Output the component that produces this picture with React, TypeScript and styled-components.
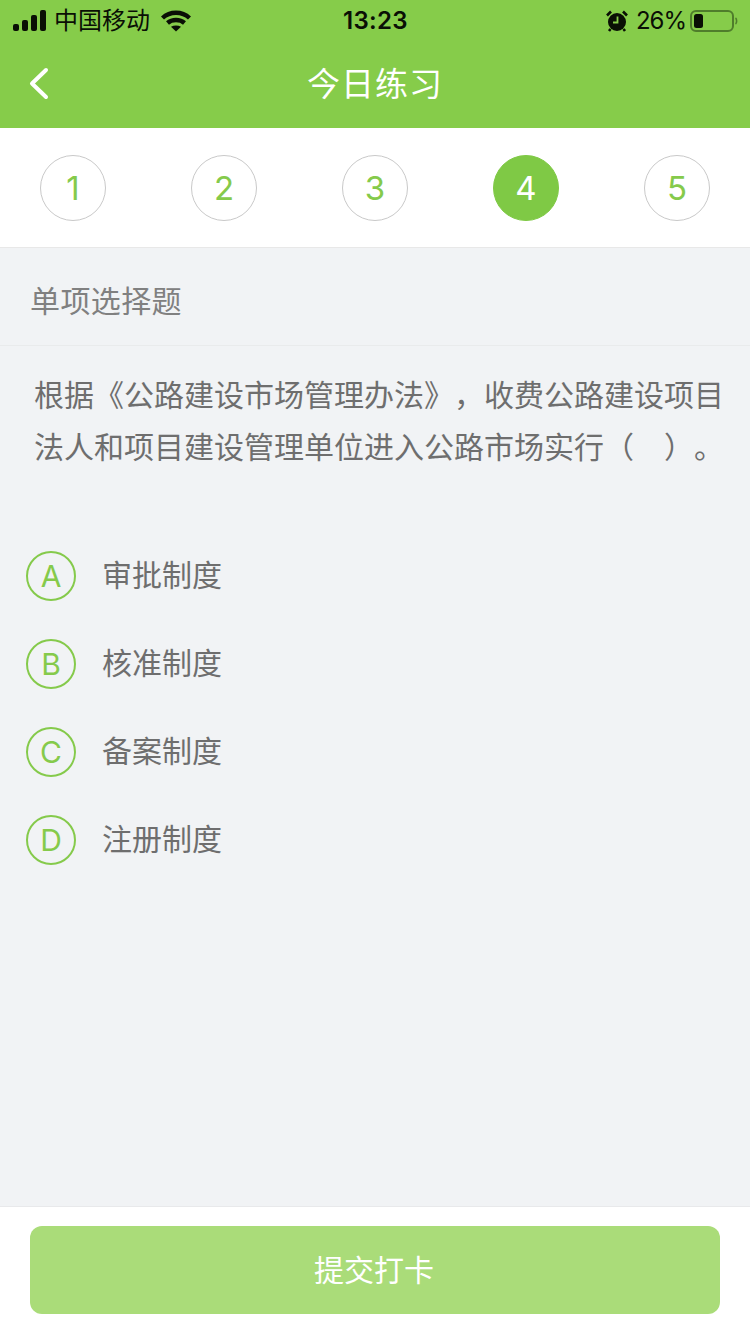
import React from "react";
import styled, { createGlobalStyle } from "styled-components";

const Global = createGlobalStyle`
  html, body { margin: 0; padding: 0; background: #f1f3f5; }
  body { font-family: "Liberation Sans", "Noto Sans CJK SC", sans-serif; }
  * { box-sizing: border-box; }
`;

const Page = styled.div`
  width: 750px;
  height: 1334px;
  display: flex;
  flex-direction: column;
  background: #f1f3f5;
  overflow: hidden;
`;

const Header = styled.header`
  height: 128px;
  background: #86cc4a;
  display: flex;
  flex-direction: column;
`;

const StatusBar = styled.div`
  height: 40px;
  padding: 1px 12px 0 13px;
  display: grid;
  grid-template-columns: 1fr auto 1fr;
  align-items: center;
  color: #0a0f05;
`;

const StatusLeft = styled.div`
  display: flex;
  align-items: center;
  gap: 8px;
`;

const StatusRight = styled.div`
  display: flex;
  align-items: center;
  justify-content: flex-end;
`;

const Carrier = styled.span`
  font-size: 24px;
  font-family: "Noto Sans CJK SC", sans-serif;
  line-height: 40px;
  margin: -3px 3px 0 -1px;
`;

const Time = styled.span`
  font-size: 24px;
  font-weight: 600;
  font-family: "Inter", sans-serif;
  letter-spacing: 0.3px;
`;

const Percent = styled.span`
  font-size: 24px;
  font-family: "Inter", sans-serif;
  letter-spacing: -1px;
  margin: 0 4px 0 8px;
`;

const NavBar = styled.div`
  position: relative;
  height: 88px;
  display: flex;
  align-items: center;
  justify-content: center;
  padding-bottom: 4px;
`;

const BackButton = styled.div`
  position: absolute;
  left: 28px;
  top: 27px;
  display: flex;
`;

const Title = styled.h1`
  margin: 0;
  color: #fff;
  font-size: 33px;
  font-weight: 400;
  letter-spacing: 1px;
  font-family: "Noto Sans CJK SC", sans-serif;
  line-height: 44px;
`;

const Steps = styled.div`
  height: 120px;
  background: #fff;
  border-bottom: 1px solid #e8e8e8;
  padding: 0 40px 0;
  display: flex;
  align-items: center;
  justify-content: space-between;
`;

const Step = styled.div<{ $active?: boolean }>`
  width: 66px;
  height: 66px;
  border-radius: 50%;
  display: flex;
  align-items: center;
  justify-content: center;
  font-size: 33px;
  font-weight: 400;
  color: ${(p) => (p.$active ? "#fff" : "#85ca4b")};
  background: ${(p) => (p.$active ? "#7fc945" : "#fff")};
  border: 1px solid ${(p) => (p.$active ? "#7fc945" : "#c9c9c9")};
  font-family: "Inter", sans-serif;
`;

const TypeRow = styled.div`
  height: 98px;
  padding: 4px 30px 0;
  border-bottom: 1px solid #e9ebec;
  display: flex;
  align-items: center;
  font-size: 30px;
  letter-spacing: 0.4px;
  color: #808080;
  font-family: "Noto Sans CJK SC", sans-serif;
`;

const Question = styled.p`
  margin: 0;
  padding: 21px 20px 0 34px;
  font-size: 30px;
  line-height: 52px;
  color: #6e6e6e;
  font-family: "Noto Sans CJK SC", sans-serif;
  white-space: nowrap;
  text-spacing-trim: space-all;
`;

const Blank = styled.span`
  display: inline-block;
  width: 30px;
`;

const Options = styled.div`
  flex: 1;
  padding: 80px 26px 0;
  display: flex;
  flex-direction: column;
  gap: 38px;
`;

const Option = styled.div`
  height: 50px;
  display: flex;
  align-items: center;
  gap: 26px;
`;

const Badge = styled.div`
  width: 50px;
  height: 50px;
  border-radius: 50%;
  border: 2px solid #85ca4b;
  color: #85ca4b;
  display: flex;
  align-items: center;
  justify-content: center;
  font-size: 30px;
  font-weight: 400;
  font-family: "Inter", sans-serif;
`;

const OptionText = styled.span`
  font-size: 30px;
  color: #6e6e6e;
  font-family: "Noto Sans CJK SC", sans-serif;
  margin-top: -6px;
`;

const Footer = styled.footer`
  height: 128px;
  background: #fff;
  border-top: 1px solid #e8e9eb;
  padding: 19px 30px 0;
`;

const Submit = styled.button`
  width: 690px;
  height: 88px;
  padding: 0 2px 4px 0;
  border: 0;
  border-radius: 12px;
  background: #aadc79;
  color: #fff;
  font-size: 30px;
  font-family: "Noto Sans CJK SC", sans-serif;
`;

const Signal = () => (
  <svg width="34" height="22" viewBox="0 0 34 22" fill="#0a0f05">
    <rect x="0" y="14" width="6" height="7" rx="2" />
    <rect x="9" y="10" width="6" height="11" rx="2" />
    <rect x="18" y="5" width="6" height="16" rx="2" />
    <rect x="27" y="0" width="6" height="21" rx="2" />
  </svg>
);

const Wifi = () => (
  <svg width="30" height="22" viewBox="0 0 30 22" fill="none" stroke="#0a0f05" strokeWidth="4.4">
    <path d="M1.5 8 C9 1 21 1 28.5 8" />
    <path d="M6.5 13 C11 9 19 9 23.5 13" />
    <path d="M15 21.5 L10 16.8 C13 15 17 15 20 16.8 Z" fill="#0a0f05" stroke="none" />
  </svg>
);

const Alarm = () => (
  <svg width="22" height="22" viewBox="0 0 22 22">
    <circle cx="11" cy="12" r="9" fill="#0a0f05" />
    <path d="M1 5.5 L5 1.5 M17 1.5 L21 5.5 M4.5 19 L3 21 M17.5 19 L19 21" stroke="#0a0f05" strokeWidth="2.6" fill="none" />
    <path d="M11.5 6.5 V12.5 H7" stroke="#86cc4a" strokeWidth="1.8" fill="none" />
  </svg>
);

const Battery = () => (
  <svg width="48" height="24" viewBox="0 0 48 24">
    <rect x="1" y="2" width="42" height="20" rx="5" fill="none" stroke="#4f7d2b" strokeWidth="2" />
    <rect x="4" y="5" width="9" height="14" rx="2.5" fill="#0a0f05" />
    <path d="M45.5 9 C47 10 47 14 45.5 15" fill="none" stroke="#4f7d2b" strokeWidth="1.6" />
  </svg>
);

const Chevron = () => (
  <svg width="22" height="34" viewBox="0 0 22 34" fill="none" stroke="#fff" strokeWidth="4" strokeLinecap="round" strokeLinejoin="round">
    <path d="M18 3 L4 16.5 L18 30" />
  </svg>
);

const steps = [1, 2, 3, 4, 5];
const options = [
  ["A", "审批制度"],
  ["B", "核准制度"],
  ["C", "备案制度"],
  ["D", "注册制度"],
];

export default function App() {
  return (
    <Page>
      <Global />
      <Header>
        <StatusBar>
          <StatusLeft>
            <Signal />
            <Carrier>中国移动</Carrier>
            <Wifi />
          </StatusLeft>
          <Time>13:23</Time>
          <StatusRight>
            <Alarm />
            <Percent>26%</Percent>
            <Battery />
          </StatusRight>
        </StatusBar>
        <NavBar>
          <BackButton>
            <Chevron />
          </BackButton>
          <Title>今日练习</Title>
        </NavBar>
      </Header>
      <Steps>
        {steps.map((n) => (
          <Step key={n} $active={n === 4}>
            {n}
          </Step>
        ))}
      </Steps>
      <TypeRow>单项选择题</TypeRow>
      <Question>
        根据《公路建设市场管理办法》，收费公路建设项目
        <br />
        法人和项目建设管理单位进入公路市场实行（<Blank />）。
      </Question>
      <Options>
        {options.map(([k, t]) => (
          <Option key={k}>
            <Badge>{k}</Badge>
            <OptionText>{t}</OptionText>
          </Option>
        ))}
      </Options>
      <Footer>
        <Submit>提交打卡</Submit>
      </Footer>
    </Page>
  );
}
